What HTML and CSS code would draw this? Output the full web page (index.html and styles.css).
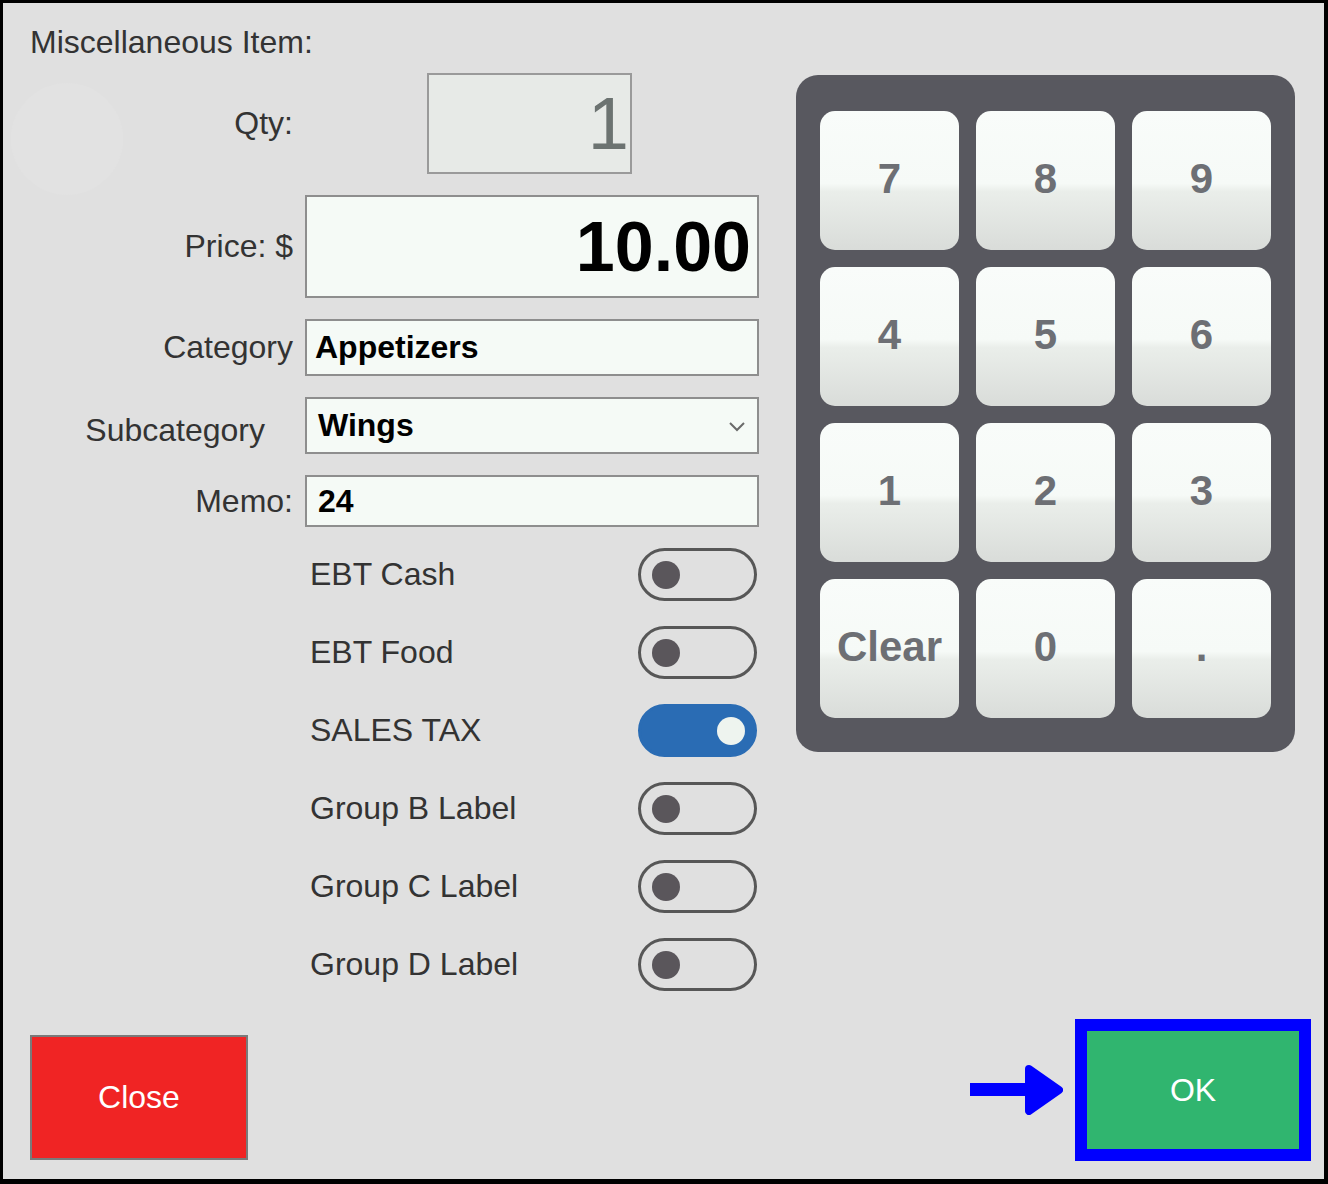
FILE: index.html
```html
<!DOCTYPE html>
<html lang="en">
<head>
  <meta charset="UTF-8" />
  <title>Miscellaneous Item</title>
  <link rel="stylesheet" href="styles.css">
</head>
<body>

<div class="window">
  <div class="ghost"></div>

  <div class="title">Miscellaneous Item:</div>

  <div class="main">
    <!-- Item form -->
    <div class="form">
      <div class="label">Qty:</div>
      <div class="field qty-field">1</div>

      <div class="label">Price: $</div>
      <div class="field price-field">10.00</div>

      <div class="label">Category</div>
      <div class="field text-field">Appetizers</div>

      <div class="label sub-label">Subcategory</div>
      <div class="field text-field select-field">
        <span>Wings</span>
        <svg class="chevron" width="18" height="12" viewBox="0 0 18 12">
          <polyline points="2,3 9,10 16,3" fill="none" stroke="#6a6a6a" stroke-width="2"/>
        </svg>
      </div>

      <div class="label">Memo:</div>
      <div class="field text-field memo-field">24</div>

      <div class="toggles">
        <div class="toggle-row"><span>EBT Cash</span><div class="switch"><div class="knob"></div></div></div>
        <div class="toggle-row"><span>EBT Food</span><div class="switch"><div class="knob"></div></div></div>
        <div class="toggle-row"><span>SALES TAX</span><div class="switch on"><div class="knob"></div></div></div>
        <div class="toggle-row"><span>Group B Label</span><div class="switch"><div class="knob"></div></div></div>
        <div class="toggle-row"><span>Group C Label</span><div class="switch"><div class="knob"></div></div></div>
        <div class="toggle-row"><span>Group D Label</span><div class="switch"><div class="knob"></div></div></div>
      </div>
    </div>

    <!-- Number pad -->
    <div class="keypad">
      <button class="key">7</button>
      <button class="key">8</button>
      <button class="key">9</button>
      <button class="key">4</button>
      <button class="key">5</button>
      <button class="key">6</button>
      <button class="key">1</button>
      <button class="key">2</button>
      <button class="key">3</button>
      <button class="key">Clear</button>
      <button class="key">0</button>
      <button class="key">.</button>
    </div>
  </div>

  <div class="footer">
    <button class="close-button">Close</button>
    <div class="ok-group">
      <svg class="arrow" width="93" height="50" viewBox="0 0 93 50">
        <rect x="0" y="18" width="62" height="13" fill="#0000ff"/>
        <polygon points="59,4 89,25 59,46" fill="#0000ff" stroke="#0000ff" stroke-width="8" stroke-linejoin="round"/>
      </svg>
      <button class="ok-button">OK</button>
    </div>
  </div>
</div>

</body>
</html>
```

FILE: styles.css
```css
body {
  margin: 0;
  padding: 0;
  background: #e0e0e0;
  font-family: "Liberation Sans", Arial, sans-serif;
}

.window {
  position: relative;
  width: 1328px;
  height: 1184px;
  box-sizing: border-box;
  border-style: solid;
  border-color: black;
  border-width: 3px 4px 5px 3px;
  background: #e0e0e0;
  display: flex;
  flex-direction: column;
}

/* faint round blob in the top left corner */
.ghost {
  position: absolute;
  left: 8px;
  top: 80px;
  width: 112px;
  height: 112px;
  border-radius: 50%;
  background: #e2e2e2;
}

.title {
  margin: 21px 0 0 27px;
  font-size: 32px;
  line-height: 36px;
  color: #333;
  position: relative;
}

.main {
  display: flex;
  align-items: flex-start;
  padding-top: 13px;
}

/* Form */
.form {
  display: grid;
  grid-template-columns: 290px 454px;
  column-gap: 12px;
  row-gap: 21px;
  position: relative;
}

.label {
  grid-column: 1;
  align-self: center;
  text-align: right;
  font-size: 32px;
  color: #333;
}

.sub-label {
  padding-right: 28px;
  margin-top: 10px;
}

.field {
  grid-column: 2;
  box-sizing: border-box;
  border: 2px solid #8e8e8e;
  background: #f5faf6;
  display: flex;
  align-items: center;
}

.qty-field {
  margin-left: 122px;
  width: 205px;
  height: 101px;
  background: #e7eae7;
  border-color: #9a9a9a;
  justify-content: flex-end;
  padding-right: 1px;
  font-size: 74px;
  color: #6c7371;
}

.price-field {
  height: 103px;
  justify-content: flex-end;
  padding-right: 6px;
  font-size: 70px;
  font-weight: bold;
  color: black;
}

.text-field {
  height: 57px;
  padding: 0 8px;
  font-size: 32px;
  font-weight: bold;
  color: black;
}

.select-field {
  justify-content: space-between;
  padding: 0 11px 0 11px;
}

.memo-field {
  height: 52px;
  padding-left: 11px;
}

/* Toggles */
.toggles {
  grid-column: 2;
  display: flex;
  flex-direction: column;
  gap: 25px;
}

.toggle-row {
  height: 53px;
  display: flex;
  align-items: center;
  justify-content: space-between;
  padding: 0 2px 0 5px;
  font-size: 32px;
  color: #333;
}

.switch {
  width: 119px;
  height: 53px;
  box-sizing: border-box;
  border: 3px solid #575757;
  border-radius: 27px;
  display: flex;
  align-items: center;
  padding-left: 11px;
}

.knob {
  width: 28px;
  height: 28px;
  border-radius: 50%;
  background: #5a565b;
}

.switch.on {
  background: #2a6cb4;
  border-color: #2a6cb4;
  justify-content: flex-end;
  padding-left: 0;
  padding-right: 9px;
}

.switch.on .knob {
  background: #eef4ef;
}

/* Keypad */
.keypad {
  margin: 2px 0 0 37px;
  padding: 36px 24px 34px 24px;
  background: #58585f;
  border-radius: 22px;
  display: grid;
  grid-template-columns: repeat(3, 139px);
  grid-auto-rows: 139px;
  gap: 17px;
}

.key {
  border: none;
  border-radius: 15px;
  background: linear-gradient(#f9fcfa 0%, #f6faf7 52%, #eaeeea 58%, #d9dcd9 100%);
  font-family: "Liberation Sans", Arial, sans-serif;
  font-size: 42px;
  font-weight: bold;
  color: #6d6f74;
  padding: 0 0 3px 0;
}

/* Footer buttons */
.footer {
  margin-top: auto;
  display: flex;
  justify-content: space-between;
  align-items: flex-end;
  padding: 0 13px 18px 27px;
}

.close-button {
  width: 218px;
  height: 125px;
  margin-bottom: 1px;
  box-sizing: border-box;
  background: #f02424;
  border: 2px solid #7a7a7a;
  color: white;
  font-family: "Liberation Sans", Arial, sans-serif;
  font-size: 32px;
}

.ok-group {
  display: flex;
  align-items: center;
  gap: 12px;
}

.arrow {
  display: block;
}

.ok-button {
  width: 236px;
  height: 142px;
  box-sizing: border-box;
  border: 12px solid #0000ff;
  background: #30b56f;
  color: white;
  font-family: "Liberation Sans", Arial, sans-serif;
  font-size: 32px;
}
```
